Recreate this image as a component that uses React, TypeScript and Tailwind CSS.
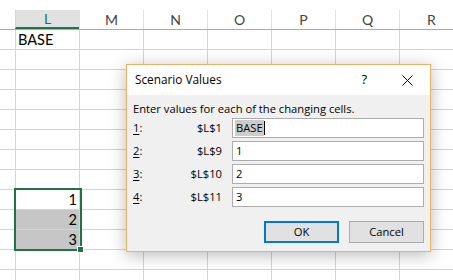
const cols = ["L", "M", "N", "O", "P", "Q", "R"];

const rows: Record<number, { text: string; align: "left" | "right"; shade?: boolean }> = {
  0: { text: "BASE", align: "left" },
  8: { text: "1", align: "right" },
  9: { text: "2", align: "right", shade: true },
  10: { text: "3", align: "right", shade: true },
};

const sheetFont = { fontFamily: "Lato, 'Liberation Sans', sans-serif" };
const uiFont = { fontFamily: "'Open Sans', 'Noto Sans', sans-serif" };

function Grid() {
  return (
    <div className="flex flex-col" style={sheetFont}>
      <div className="h-[10px]" />
      <div className="flex h-[20px] border-b border-[#ababab]">
        <div className="w-[15px] shrink-0" />
        {cols.map((c) => (
          <div
            key={c}
            className={
              c === "L"
                ? "w-[64px] shrink-0 border-l border-[#d4d4d4] bg-[#e1e1e1] border-b-2 border-b-[#217346] text-[#217346] flex items-center justify-center text-[14px]"
                : "w-[64px] shrink-0 border-l border-[#e1e1e1] text-[#444] flex items-center justify-center text-[14px]"
            }
          >
            {c}
          </div>
        ))}
      </div>
      {Array.from({ length: 13 }).map((_, r) => {
        const cell = rows[r];
        return (
          <div key={r} className="flex h-[20px] border-b border-[#d4d4d4]">
            <div className="w-[15px] shrink-0" />
            {cols.map((c, i) => (
              <div
                key={c}
                className={
                  "w-[64px] shrink-0 border-l border-[#d4d4d4] text-[14.5px] text-black leading-[20px] px-[2px] " +
                  (i === 0 && cell?.shade ? "bg-[#c6c6c6] " : "") +
                  (i === 0 && cell?.align === "right" ? "text-right" : "text-left")
                }
              >
                {i === 0 && cell ? cell.text : ""}
              </div>
            ))}
          </div>
        );
      })}
    </div>
  );
}

function ValueRow({ n, cell, value, first }: { n: string; cell: string; value: string; first?: boolean }) {
  return (
    <div className="flex items-center h-[20px]">
      <span className="w-[20px]">
        <span className="underline underline-offset-2">{n}</span>:
      </span>
      <span className="w-[69px] text-right">{cell}</span>
      <div className="ml-[10px] w-[192px] h-[20px] bg-white border border-[#acacac] flex items-center pl-[2px]">
        {first ? (
          <>
            <span className="bg-[#cccccc] px-[1px] leading-[16px]">{value}</span>
            <span className="w-px h-[14px] bg-black" />
          </>
        ) : (
          <span className="pl-px">{value}</span>
        )}
      </div>
    </div>
  );
}

function Dialog() {
  return (
    <div
      className="absolute left-[126px] top-[64px] w-[305px] h-[188px] border border-[#e9b35f] bg-[#f0f0f0] shadow-[0_3px_16px_rgba(0,0,0,0.28)] flex flex-col text-[11.2px] text-black"
      style={uiFont}
    >
      <div className="h-[30px] bg-white flex items-center pl-[8px]">
        <span className="text-[11.8px]">Scenario Values</span>
        <span className="ml-auto mr-[35px] text-[13px]">?</span>
        <svg width="11" height="11" viewBox="0 0 11 11" className="mr-[17px]">
          <path d="M0.5 0.5 L10.5 10.5 M10.5 0.5 L0.5 10.5" stroke="#000" strokeWidth="1" />
        </svg>
      </div>
      <div className="flex flex-col pl-[6px] pt-[5px]">
        <div className="h-[18px] leading-[18px]">Enter values for each of the changing cells.</div>
        <div className="flex flex-col gap-[3px]">
          <ValueRow n="1" cell="$L$1" value="BASE" first />
          <ValueRow n="2" cell="$L$9" value="1" />
          <ValueRow n="3" cell="$L$10" value="2" />
          <ValueRow n="4" cell="$L$11" value="3" />
        </div>
        <div className="flex justify-end gap-[10px] pr-[6px] mt-[14px]">
          <button className="w-[75px] h-[22px] border-2 border-[#0078d7] bg-[#e1e1e1]">OK</button>
          <button className="w-[75px] h-[22px] border border-[#adadad] bg-[#e1e1e1]">Cancel</button>
        </div>
      </div>
    </div>
  );
}

export default function App() {
  return (
    <div className="relative w-[453px] h-[280px] overflow-hidden bg-white">
      <Grid />
      <div className="absolute left-[14px] top-[188px] w-[68px] h-[63px] border-2 border-[#217346]" />
      <div className="absolute left-[77px] top-[246px] w-[7px] h-[7px] bg-[#217346] border border-white" />
      <Dialog />
    </div>
  );
}
